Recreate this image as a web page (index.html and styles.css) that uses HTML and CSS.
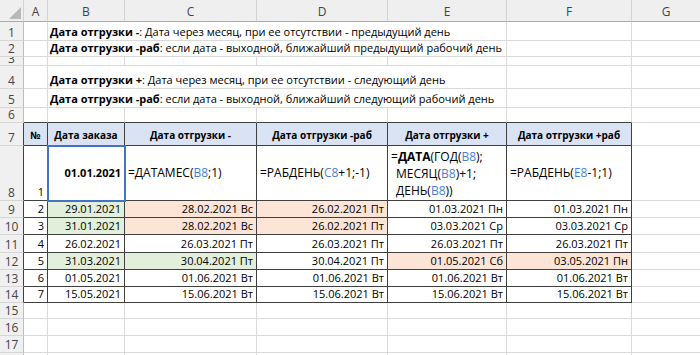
FILE: index.html
```html
<!DOCTYPE html>
<html lang="ru">
<head>
    <meta charset="UTF-8">
    <meta name="viewport" content="width=device-width, initial-scale=1.0">
    <title>Дата отгрузки</title>
    <link rel="stylesheet" href="styles.css">
</head>
<body>

<table class="sheet">
    <colgroup>
        <col class="col-rn">
        <col class="col-a">
        <col class="col-b">
        <col class="col-c">
        <col class="col-d">
        <col class="col-e">
        <col class="col-f">
        <col class="col-g">
    </colgroup>

    <!-- column letters -->
    <tr class="r-head">
        <th class="corner">
            <svg width="24" height="21" viewBox="0 0 24 21"><polygon points="9,19 21,19 21,7" fill="#b8b8b8"/></svg>
        </th>
        <th class="ch">A</th>
        <th class="ch">B</th>
        <th class="ch">C</th>
        <th class="ch">D</th>
        <th class="ch">E</th>
        <th class="ch">F</th>
        <th class="ch last">G</th>
    </tr>

    <!-- notes above the table -->
    <tr class="r1">
        <th class="rn">1</th>
        <td></td>
        <td colspan="4" class="note"><b>Дата отгрузки -</b>: Дата через месяц, при ее отсутствии - предыдущий день</td>
        <td></td><td class="last"></td>
    </tr>
    <tr class="r2">
        <th class="rn">2</th>
        <td></td>
        <td colspan="4" class="note"><b>Дата отгрузки -раб</b>: если дата - выходной, ближайший предыдущий рабочий день</td>
        <td></td><td class="last"></td>
    </tr>
    <tr class="r3">
        <th class="rn"><div class="clip">3</div></th>
        <td></td><td></td><td></td><td></td><td></td><td></td><td class="last"></td>
    </tr>
    <tr class="r4">
        <th class="rn">4</th>
        <td></td>
        <td colspan="4" class="note"><b>Дата отгрузки +</b>: Дата через месяц, при ее отсутствии - следующий день</td>
        <td></td><td class="last"></td>
    </tr>
    <tr class="r5">
        <th class="rn">5</th>
        <td></td>
        <td colspan="4" class="note"><b>Дата отгрузки -раб</b>: если дата - выходной, ближайший следующий рабочий день</td>
        <td></td><td class="last"></td>
    </tr>
    <tr class="r6">
        <th class="rn">6</th>
        <td class="above"></td><td class="above"></td><td class="above"></td><td class="above"></td><td class="above"></td><td class="above"></td><td class="last"></td>
    </tr>

    <!-- table header -->
    <tr class="r7">
        <th class="rn edge">7</th>
        <td class="t hd">№</td>
        <td class="t hd">Дата заказа</td>
        <td class="t hd">Дата отгрузки -</td>
        <td class="t hd">Дата отгрузки -раб</td>
        <td class="t hd">Дата отгрузки +</td>
        <td class="t hd">Дата отгрузки +раб</td>
        <td class="last"></td>
    </tr>

    <!-- formulas row -->
    <tr class="r8">
        <th class="rn edge">8</th>
        <td class="t num">1</td>
        <td class="t num mid selected"><b>01.01.2021</b></td>
        <td class="t fx">=ДАТАМЕС(<span class="ref">B8</span>;1)</td>
        <td class="t fx">=РАБДЕНЬ(<span class="ref">C8</span>+1;-1)</td>
        <td class="t fx multi">=<b>ДАТА</b>(ГОД(<span class="ref">B8</span>);<br><span class="indent">МЕСЯЦ(<span class="ref">B8</span>)+1;</span><br><span class="indent">ДЕНЬ(<span class="ref">B8</span>))</span></td>
        <td class="t fx">=РАБДЕНЬ(<span class="ref">E8</span>-1;1)</td>
        <td class="last"></td>
    </tr>

    <tr class="r-data">
        <th class="rn edge">9</th>
        <td class="t num">2</td>
        <td class="t num green">29.01.2021</td>
        <td class="t num peach">28.02.2021 Вс</td>
        <td class="t num peach">26.02.2021 Пт</td>
        <td class="t num">01.03.2021 Пн</td>
        <td class="t num">01.03.2021 Пн</td>
        <td class="last"></td>
    </tr>
    <tr class="r-data">
        <th class="rn edge">10</th>
        <td class="t num">3</td>
        <td class="t num green">31.01.2021</td>
        <td class="t num peach">28.02.2021 Вс</td>
        <td class="t num peach">26.02.2021 Пт</td>
        <td class="t num">03.03.2021 Ср</td>
        <td class="t num">03.03.2021 Ср</td>
        <td class="last"></td>
    </tr>
    <tr class="r-data tall">
        <th class="rn edge">11</th>
        <td class="t num">4</td>
        <td class="t num">26.02.2021</td>
        <td class="t num">26.03.2021 Пт</td>
        <td class="t num">26.03.2021 Пт</td>
        <td class="t num">26.03.2021 Пт</td>
        <td class="t num">26.03.2021 Пт</td>
        <td class="last"></td>
    </tr>
    <tr class="r-data">
        <th class="rn edge">12</th>
        <td class="t num">5</td>
        <td class="t num green">31.03.2021</td>
        <td class="t num green">30.04.2021 Пт</td>
        <td class="t num">30.04.2021 Пт</td>
        <td class="t num peach">01.05.2021 Сб</td>
        <td class="t num peach">03.05.2021 Пн</td>
        <td class="last"></td>
    </tr>
    <tr class="r-data">
        <th class="rn edge">13</th>
        <td class="t num">6</td>
        <td class="t num">01.05.2021</td>
        <td class="t num">01.06.2021 Вт</td>
        <td class="t num">01.06.2021 Вт</td>
        <td class="t num">01.06.2021 Вт</td>
        <td class="t num">01.06.2021 Вт</td>
        <td class="last"></td>
    </tr>
    <tr class="r-data short">
        <th class="rn edge">14</th>
        <td class="t num">7</td>
        <td class="t num">15.05.2021</td>
        <td class="t num">15.06.2021 Вт</td>
        <td class="t num">15.06.2021 Вт</td>
        <td class="t num">15.06.2021 Вт</td>
        <td class="t num">15.06.2021 Вт</td>
        <td class="last"></td>
    </tr>

    <!-- empty rows below -->
    <tr class="r-data short">
        <th class="rn">15</th>
        <td></td><td></td><td></td><td></td><td></td><td></td><td class="last"></td>
    </tr>
    <tr class="r-data">
        <th class="rn">16</th>
        <td></td><td></td><td></td><td></td><td></td><td></td><td class="last"></td>
    </tr>
    <tr class="r-data">
        <th class="rn">17</th>
        <td></td><td></td><td></td><td></td><td></td><td></td><td class="last"></td>
    </tr>
    <tr class="r-data">
        <th class="rn">18</th>
        <td></td><td></td><td></td><td></td><td></td><td></td><td class="last"></td>
    </tr>
</table>

</body>
</html>
```

FILE: styles.css
```css
html, body {
    margin: 0;
    overflow: hidden;
    background: #fff;
}
body {
    font-family: "Open Sans", "Noto Sans", sans-serif;
    font-size: 11px;
    color: #000;
}

.sheet {
    border-collapse: separate;
    border-spacing: 0;
    table-layout: fixed;
    width: 700px;
}
.col-rn { width: 24px; }
.col-a { width: 24px; }
.col-b { width: 77px; }
.col-c { width: 132px; }
.col-d { width: 131px; }
.col-e { width: 119px; }
.col-f { width: 125px; }
.col-g { width: 68px; }

.sheet td, .sheet th {
    padding: 0 0 1px 0;
    border-right: 1px solid #dadada;
    border-bottom: 1px solid #dadada;
    white-space: nowrap;
    overflow: hidden;
    vertical-align: bottom;
    line-height: 14px;
    font-weight: normal;
    text-align: left;
}
.sheet .last {
    border-right: none;
}

/* row heights */
.r-head { height: 22px; }
.r1 { height: 19px; }
.r2 { height: 16px; }
.r3 { height: 8px; }
.r4 { height: 23px; }
.r5 { height: 19px; }
.r6 { height: 15px; }
.r7 { height: 23px; }
.r8 { height: 55px; }
.r-data { height: 17px; }
.r-data.tall { height: 18px; }
.r-data.short { height: 16px; }

/* column letters and row numbers */
.sheet .ch {
    background: #efefef;
    color: #444;
    font-size: 12px;
    text-align: center;
    border-right-color: #d2d2d2;
    border-bottom-color: #ababab;
    padding-bottom: 2px;
}
.sheet .corner {
    background: #efefef;
    border-right-color: #d2d2d2;
    border-bottom-color: #ababab;
    padding: 0;
}
.corner svg {
    display: block;
}
.sheet .rn {
    background: #f0f0f0;
    color: #444;
    font-size: 12px;
    line-height: 13px;
    text-align: center;
    border-right-color: #bdbdbd;
    border-bottom-color: #d6d6d6;
    padding-bottom: 1px;
}
.sheet .rn.edge {
    border-right-color: #404040;
}
.clip {
    height: 7px;
    overflow: hidden;
    display: flex;
    align-items: flex-end;
    justify-content: center;
    line-height: 11px;
}

/* notes */
.sheet .note {
    padding-left: 2px;
}

/* table cells */
.sheet .above {
    border-bottom-color: #404040;
}
.sheet .t {
    border-right-color: #404040;
    border-bottom-color: #404040;
}
.sheet .hd {
    background: #dae3f3;
    font-size: 10px;
    font-weight: bold;
    text-align: center;
    padding-bottom: 3px;
}
.sheet .num {
    text-align: right;
    padding-right: 3px;
}
.sheet .mid {
    vertical-align: middle;
}
.sheet .fx {
    vertical-align: middle;
    padding-left: 3px;
    font-size: 12px;
}
.sheet .multi {
    line-height: 17px;
    padding-top: 1px;
}
.indent {
    padding-left: 5px;
}
.ref {
    color: #4a7fd0;
}
.selected {
    outline: 2px solid #4472c4;
    outline-offset: -1px;
}
.green {
    background: #e2efda;
}
.peach {
    background: #fce4d6;
}
```
